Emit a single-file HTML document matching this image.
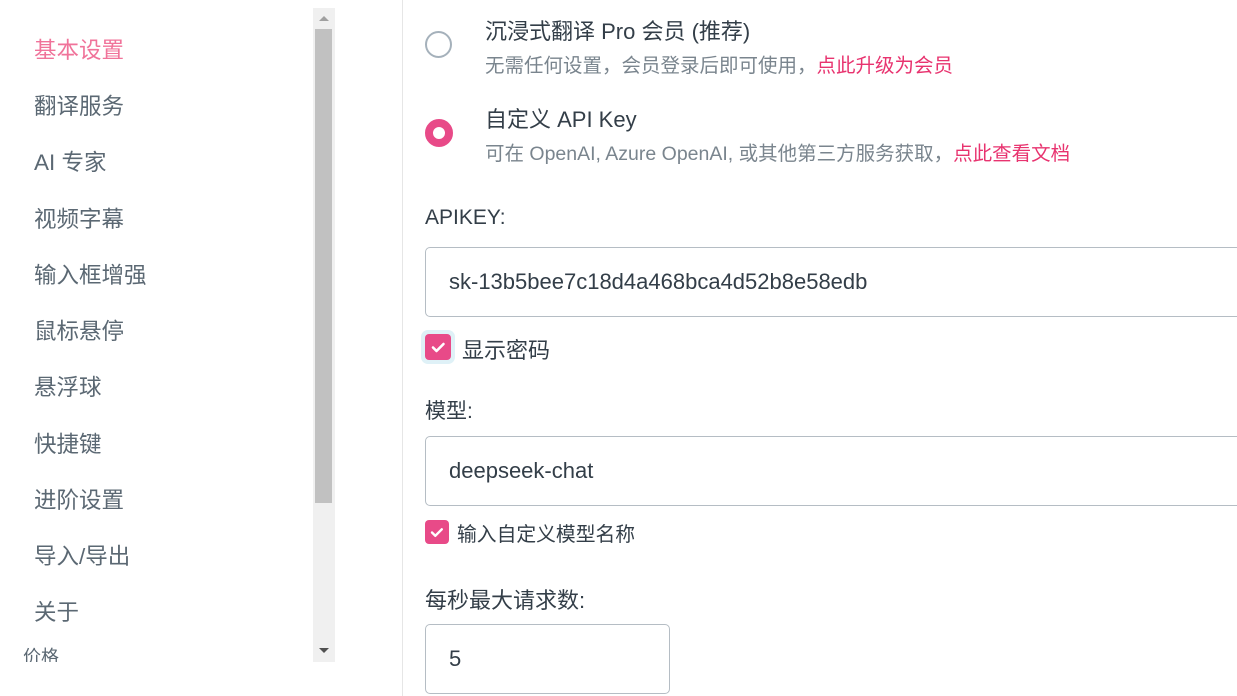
<!DOCTYPE html>
<html><head><meta charset="utf-8"><style>
*{margin:0;padding:0;box-sizing:border-box}
body{width:1237px;height:696px;overflow:hidden;background:#fff;font-family:"Liberation Sans","Noto Sans CJK SC",sans-serif;color:#3b4a56;position:relative}
.nav{position:absolute;left:34px;font-size:22.5px;color:#5b6873}
.sb{position:absolute;left:313px;top:8px;width:22px;height:654px;background:#f0f0f0}
.thumb{position:absolute;left:2px;top:21px;width:17px;height:474px;background:#c1c1c1}
.div{position:absolute;left:402px;top:0;width:1px;height:696px;background:#e6e6e6}
.abs{position:absolute;white-space:nowrap}
.t{font-size:22px;color:#333e48}
.s{font-size:19.5px;color:#7a858e}
.pink{color:#e8336f}
.inp{position:absolute;border:1px solid #b5bdc4;border-radius:5px;font-size:22px;color:#333e48;padding-left:23px;display:flex;align-items:center}
.cb{position:absolute;background:#e84a88;border-radius:4px}
</style></head><body>
<div class="nav" style="top:33px;color:#f0739a">基本设置</div>
<div class="nav" style="top:89px">翻译服务</div>
<div class="nav" style="top:145px">AI 专家</div>
<div class="nav" style="top:202px">视频字幕</div>
<div class="nav" style="top:258px">输入框增强</div>
<div class="nav" style="top:314px">鼠标悬停</div>
<div class="nav" style="top:370px">悬浮球</div>
<div class="nav" style="top:427px">快捷键</div>
<div class="nav" style="top:483px">进阶设置</div>
<div class="nav" style="top:539px">导入/导出</div>
<div class="nav" style="top:595px">关于</div>
<div class="abs" style="left:23px;top:646px;height:16px;overflow:hidden;font-size:18px;color:#5b6873;line-height:22px">价格</div>
<div class="sb"><div class="thumb"></div>
<div class="abs" style="left:6px;top:8px;border:5px solid transparent;border-bottom:5px solid #a0a0a0;border-top:0"></div>
<div class="abs" style="left:6px;top:640px;border:5px solid transparent;border-top:5px solid #505050;border-bottom:0"></div></div>
<div class="div"></div>
<div class="abs" style="left:425px;top:31px;width:27px;height:27px;border:2px solid #a5b1bb;border-radius:50%"></div>
<div class="abs t" style="left:485px;top:14px">沉浸式翻译 Pro 会员 (推荐)</div>
<div class="abs s" style="left:485px;top:49px">无需任何设置，会员登录后即可使用，<span class="pink">点此升级为会员</span></div>
<div class="abs" style="left:425px;top:119px;width:28px;height:28px;border:8px solid #e84a88;border-radius:50%"></div>
<div class="abs t" style="left:485px;top:102px">自定义 API Key</div>
<div class="abs s" style="left:485px;top:137px">可在 OpenAI, Azure OpenAI, 或其他第三方服务获取，<span class="pink">点此查看文档</span></div>
<div class="abs t" style="left:425px;top:206px;font-size:21px">APIKEY:</div>
<div class="inp" style="left:425px;top:247px;width:830px;height:70px">sk-13b5bee7c18d4a468bca4d52b8e58edb</div>
<div class="abs" style="left:421px;top:330px;width:34px;height:34px;border-radius:7px;background:#dff1f7"></div>
<div class="cb" style="left:425px;top:334px;width:26px;height:26px"><svg width="26" height="26"><path d="M8 13.5l3.5 3.5 7-7" stroke="#fff" stroke-width="2.6" fill="none" stroke-linecap="round" stroke-linejoin="round"/></svg></div>
<div class="abs t" style="left:462px;top:333px">显示密码</div>
<div class="abs t" style="left:425px;top:395px;font-size:21px">模型:</div>
<div class="inp" style="left:425px;top:436px;width:830px;height:70px">deepseek-chat</div>
<div class="cb" style="left:425px;top:520px;width:24px;height:24px"><svg width="24" height="24"><path d="M7 12.5l3.3 3.3 6.5-6.5" stroke="#fff" stroke-width="2.4" fill="none" stroke-linecap="round" stroke-linejoin="round"/></svg></div>
<div class="abs" style="left:457px;top:518px;font-size:19.8px;color:#333e48">输入自定义模型名称</div>
<div class="abs t" style="left:425px;top:583px">每秒最大请求数:</div>
<div class="inp" style="left:425px;top:624px;width:245px;height:70px">5</div>
</body></html>
